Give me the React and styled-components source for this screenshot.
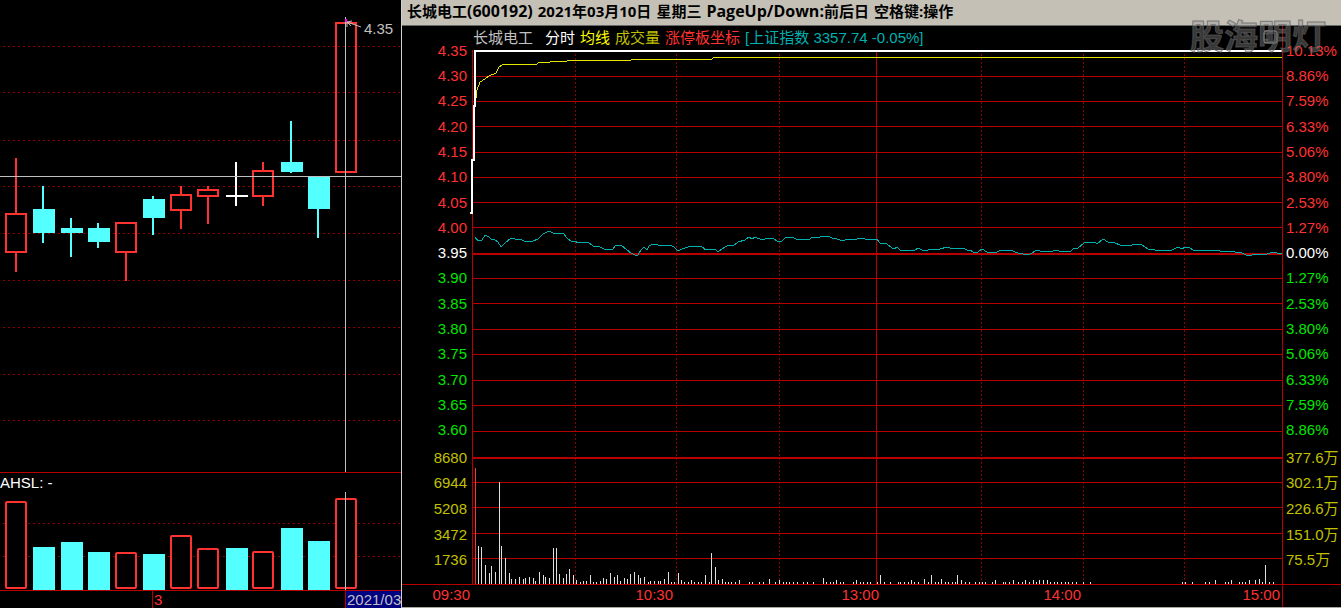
import styled, { createGlobalStyle, css } from 'styled-components';

const colorRed = '#ff3232';
const colorGrid = '#b80000';
const colorGridDim = '#900000';
const colorCyan = '#54ffff';
const colorGreen = '#00e600';
const colorGold = '#c0c000';
const colorTeal = '#00b0b0';
const colorSilver = '#c0c0c0';
const colorTitleBar = '#c4c0b6';
const fontPlain = `"Liberation Sans", "Noto Sans CJK SC", sans-serif`;

const GlobalStyle = createGlobalStyle`
  * {
    box-sizing: border-box;
  }

  body {
    margin: 0;
    background: #000;
    color: ${colorSilver};
    font-family: ${fontPlain};
    font-size: 15px;
    line-height: 18px;
  }
`;

const Page = styled.main`
  position: relative;
  display: grid;
  grid-template-columns: 401fr 940fr;
  min-height: 100vh;
  overflow: hidden;
`;

const DailyPanel = styled.section`
  display: flex;
  flex-direction: column;
  min-width: 0;
`;

const Chart = styled.svg`
  display: block;
  width: 100%;
  height: ${({ $height }) => $height}px;
  overflow: visible;
`;

const IndicatorTitle = styled.h2`
  margin: 0;
  height: 20px;
  border-top: 1px solid ${colorGrid};
  color: #fff;
  font-size: 15px;
  font-weight: 400;
  line-height: 19px;
`;

const DateAxis = styled.div`
  display: grid;
  grid-template-columns: 152fr 193fr 56fr;
  height: 18px;
  border-top: 1px solid ${colorGrid};
  line-height: 18px;
`;

const DateCell = styled.span`
  overflow: hidden;
  white-space: nowrap;
  color: ${colorRed};

  ${({ $tick }) =>
    $tick &&
    css`
      border-left: 1px solid ${colorGrid};
      padding-left: 1px;
    `
  }

  ${({ $current }) =>
    $current &&
    css`
      background: #000080;
      color: ${colorSilver};
    `
  }
`;

const MinutePanel = styled.section`
  display: flex;
  flex-direction: column;
  min-width: 0;
  border-left: 1px solid #d0d0d0;
  border-bottom: 1px solid #a8a8a0;
`;

const TitleBar = styled.h1`
  display: flex;
  gap: 5px;
  margin: 0;
  height: 26px;
  padding-left: 5px;
  border-bottom: 1px solid #686868;
  background: ${colorTitleBar};
  color: #000;
  font-family: "Open Sans", "Noto Sans CJK SC", sans-serif;
  font-size: 15px;
  font-weight: 700;
  line-height: 23px;
  white-space: nowrap;
`;

const TitleLatin = styled.span`
  font-size: 16px;
`;

const Body = styled.div`
  display: grid;
  grid-template-columns: 70px 1fr 59px;
`;

const ScaleColumn = styled.div`
  padding-top: 12px;
  text-align: right;
  padding-right: 5px;

  ${({ $side }) =>
    $side === 'right' &&
    css`
      border-left: 1px solid ${colorGrid};
      padding-left: 3px;
      padding-right: 0;
      text-align: left;
    `
  }
`;

const ScaleGroup = styled.div`
  display: grid;
  grid-auto-rows: 1fr;
  align-items: center;
  height: ${({ $height }) => $height}px;
  margin-bottom: 2px;
`;

const ScaleLabel = styled.span`
  color: ${({ $color }) => $color};
  white-space: nowrap;
`;

const Plot = styled.div`
  min-width: 0;
`;

const Legend = styled.div`
  display: flex;
  gap: 5px;
  height: 24px;
  padding-left: 1px;
  line-height: 24px;
  white-space: nowrap;
`;

const LegendName = styled.span`
  margin-right: 7px;
`;

const LegendItem = styled.span`
  color: ${({ $color }) => $color};
`;

const TimeAxis = styled.div`
  display: grid;
  grid-template-columns: 68px 203fr 206fr 202fr 199fr 61px;
  flex: 1;
  border-top: 1px solid ${colorGrid};
  color: ${colorRed};
  line-height: 20px;
  text-align: right;
`;

const TimeEnd = styled.span`
  margin-left: 2px;
  border-left: 1px solid ${colorGrid};
`;

const Watermark = styled.div`
  position: absolute;
  top: 10px;
  right: 15px;
  color: rgba(150, 150, 150, 0.4);
  font-family: "Noto Sans CJK SC", sans-serif;
  font-size: 34px;
  font-weight: 700;
  line-height: 50px;
  -webkit-text-stroke: 1px rgba(90, 90, 90, 0.7);
`;

const RestoreIcon = styled.svg`
  position: absolute;
  top: 30px;
  right: 62px;
  width: 16px;
  height: 15px;
`;

// type, left edge, high, body top, body bottom, low, top of the volume bar
const candles = [
  ['up', 5, 158, 213, 253, 272, 501],
  ['down', 33, 186, 209, 233, 243, 547],
  ['down', 61, 218, 228, 233, 257, 542],
  ['down', 88, 223, 228, 242, 248, 552],
  ['up', 115, 222, 222, 253, 281, 552],
  ['down', 143, 196, 199, 218, 235, 554],
  ['up', 170, 186, 194, 211, 229, 535],
  ['up', 197, 186, 189, 197, 224, 548],
  ['flat', 226, 162, 195, 197, 206, 548],
  ['up', 252, 162, 170, 197, 206, 551],
  ['down', 281, 121, 162, 172, 173, 528],
  ['down', 308, 177, 177, 209, 238, 541],
  ['up', 335, 22, 22, 173, 173, 498]
];

const dailyGrid = [46, 92, 140, 186, 233, 280, 327, 374, 420];

const priceLabels = [
  '4.35', '4.30', '4.25', '4.20', '4.15', '4.10', '4.05', '4.00',
  '3.95', '3.90', '3.85', '3.80', '3.75', '3.70', '3.65', '3.60'
];

const percentLabels = [
  '10.13%', '8.86%', '7.59%', '6.33%', '5.06%', '3.80%', '2.53%', '1.27%',
  '0.00%', '1.27%', '2.53%', '3.80%', '5.06%', '6.33%', '7.59%', '8.86%'
];

const volumeLabels = ['8680', '6944', '5208', '3472', '1736'];
const amountLabels = ['377.6万', '302.1万', '226.6万', '151.0万', '75.5万'];

const gridRows = [
  76, 101, 126, 152, 177, 202, 227, 278, 303, 329,
  354, 380, 405, 431, 482, 507, 533, 558
];
const gridColumns = [575, 676, 779, 981, 1083, 1184];

const pricePoints = '470,213 472,213 472,160 474,160 474,106 475,106 475,51 1282,51';

const averagePoints =
  '475,104 476,98 477,90 480,82 485,79 489,76 496,73 499,67 502,65 507,64 537,64 ' +
  '538,63 550,62 567,61 568,60 631,60 632,59 712,59 714,57 1282,57';

const indexPoints =
  '475,237 478,241 482,240 485,235 489,237 492,240 494,239 498,242 501,247 505,243 ' +
  '511,238 515,239 520,239 526,242 533,241 538,239 543,234 549,231 553,233 563,233 ' +
  '567,238 572,242 575,241 578,243 582,242 588,242 593,246 598,246 606,250 613,249 ' +
  '616,245 621,245 627,250 631,253 635,255 638,255 641,250 644,247 647,250 649,246 ' +
  '653,244 658,245 670,245 674,247 678,251 682,249 688,247 692,246 695,247 698,246 ' +
  '702,247 706,250 715,249 718,252 722,249 727,246 730,245 733,246 738,242 745,240 ' +
  '749,237 752,239 755,237 762,240 768,238 773,238 777,241 781,242 785,238 793,237 ' +
  '797,240 810,239 812,237 820,237 823,236 828,236 832,238 837,239 843,241 847,239 ' +
  '857,239 860,238 865,239 868,240 877,239 880,243 887,244 892,248 894,249 897,247 ' +
  '900,250 915,250 918,248 924,251 932,249 940,249 947,247 950,248 963,248 967,250 ' +
  '970,250 973,252 978,252 982,249 987,252 997,252 1001,250 1010,250 1018,253 ' +
  '1028,255 1032,253 1037,250 1040,251 1053,251 1057,250 1059,251 1067,251 1070,252 ' +
  '1073,249 1078,248 1084,243 1095,242 1097,244 1103,239 1108,242 1115,243 1120,245 ' +
  '1130,246 1134,244 1142,245 1148,249 1155,250 1172,250 1178,247 1182,249 1185,247 ' +
  '1189,247 1193,250 1217,250 1220,251 1232,251 1235,252 1240,252 1248,256 1252,255 ' +
  '1267,254 1273,252 1277,253 1282,254';

// x and height of every traded minute that stands out
const volumeBars = [
  [478, 37], [481, 36], [485, 18], [489, 10], [491, 17], [495, 11], [499, 101],
  [501, 37], [505, 25], [509, 10], [511, 4], [515, 4], [519, 6], [523, 4], [525, 5],
  [529, 6], [533, 5], [535, 2], [539, 11], [543, 8], [545, 6], [549, 5], [553, 35],
  [556, 35], [559, 9], [563, 5], [566, 9], [569, 14], [573, 8], [576, 3], [580, 1],
  [583, 2], [586, 2], [590, 8], [593, 1], [596, 1], [600, 2], [603, 5], [606, 4],
  [610, 10], [614, 6], [617, 8], [620, 2], [624, 5], [627, 4], [630, 9], [634, 11],
  [638, 8], [640, 5], [644, 6], [648, 1], [650, 2], [654, 2], [658, 2], [660, 2],
  [664, 4], [668, 11], [671, 1], [674, 1], [678, 10], [681, 3], [684, 1], [688, 1],
  [691, 3], [694, 1], [698, 1], [701, 1], [705, 8], [709, 1], [711, 30], [715, 16],
  [718, 3], [722, 4], [725, 1], [728, 1], [731, 1], [735, 1], [739, 3], [749, 1],
  [752, 1], [759, 1], [763, 1], [769, 4], [775, 1], [779, 3], [783, 1], [786, 1],
  [789, 1], [793, 1], [797, 1], [803, 1], [807, 1], [813, 1], [823, 5], [826, 1],
  [830, 1], [833, 1], [836, 3], [840, 1], [843, 1], [853, 1], [856, 3], [860, 1],
  [863, 1], [867, 1], [870, 1], [877, 1], [880, 8], [884, 1], [890, 1], [898, 1],
  [900, 1], [904, 1], [908, 1], [911, 3], [914, 1], [918, 1], [924, 4], [928, 1],
  [931, 8], [935, 1], [938, 1], [941, 4], [945, 1], [948, 1], [952, 1], [955, 1],
  [957, 8], [961, 3], [965, 1], [969, 1], [975, 1], [979, 1], [982, 1], [985, 1],
  [992, 1], [995, 3], [1003, 1], [1005, 1], [1009, 1], [1013, 3], [1018, 1],
  [1022, 1], [1025, 3], [1029, 1], [1033, 3], [1036, 1], [1039, 3], [1043, 3],
  [1047, 3], [1050, 1], [1054, 1], [1057, 1], [1061, 1], [1065, 1], [1068, 1],
  [1072, 1], [1076, 1], [1083, 1], [1090, 1], [1182, 1], [1185, 1], [1192, 1],
  [1205, 1], [1209, 1], [1215, 3], [1225, 1], [1228, 1], [1231, 3], [1239, 1],
  [1242, 1], [1245, 1], [1249, 3], [1255, 3], [1259, 4], [1262, 1], [1265, 18],
  [1269, 1], [1273, 1], [1282, 2]
];

const scaleColor = i => {
  if (i === 8) return '#ffffff';
  return i < 8 ? colorRed : colorGreen;
};

const Candle = ({ type, x, high, top, bottom, low }) => {
  const wickX = x + 10;

  if (type === 'up') {
    return (
      <g fill={colorRed}>
        <rect x={wickX} y={high} width="2" height={top - high} />
        <rect x={wickX} y={bottom} width="2" height={low - bottom} />
        <rect
          x={x + 1}
          y={top + 1}
          width="20"
          height={bottom - top - 2}
          fill="none"
          stroke={colorRed}
          strokeWidth="2"
        />
      </g>
    );
  }

  return (
    <g fill={type === 'flat' ? '#fff' : colorCyan}>
      <rect x={wickX - 1} y={high} width="2" height={low - high} />
      <rect x={x} y={top} width="22" height={bottom - top} />
    </g>
  );
};

const DailyChart = () => (
  <Chart $height={472} viewBox="0 0 401 472" preserveAspectRatio="none" role="img" aria-label="日K线">
    {dailyGrid.map(y => (
      <line
        key={y}
        x1="3"
        x2="401"
        y1={y + 0.5}
        y2={y + 0.5}
        stroke={colorGridDim}
        strokeDasharray="2 3"
      />
    ))}
    {candles.map(([type, x, high, top, bottom, low]) => (
      <Candle key={x} type={type} x={x} high={high} top={top} bottom={bottom} low={low} />
    ))}
    <rect x="0" y="176" width="401" height="1" fill="#c0c0c0" />
    <rect x="345" y="17" width="1" height="455" fill="#c0c0c0" />
    <path d="M347 22l14 5M347 22v5M347 22l5-1M347 22l4 4" fill="none" stroke={colorSilver} />
    <rect x="345" y="19" width="2" height="3" fill="#ff00ff" />
    <text x="364" y="34" fill={colorSilver} fontSize="15">4.35</text>
  </Chart>
);

const TurnoverChart = () => (
  <Chart $height={98} viewBox="0 492 401 98" preserveAspectRatio="none" role="img" aria-label="换手率">
    {[523, 556].map(y => (
      <line
        key={y}
        x1="3"
        x2="401"
        y1={y + 0.5}
        y2={y + 0.5}
        stroke={colorGridDim}
        strokeDasharray="2 3"
      />
    ))}
    {candles.map(([type, x, , , , , top]) =>
      type === 'up' ? (
        <rect
          key={x}
          x={x + 1}
          y={top + 1}
          width="20"
          height={587 - top}
          rx="1"
          fill="#000"
          stroke={colorRed}
          strokeWidth="2"
        />
      ) : (
        <rect key={x} x={x} y={top} width="22" height={590 - top} fill={colorCyan} />
      )
    )}
    <rect x="345" y="492" width="1" height="98" fill="#c0c0c0" />
  </Chart>
);

const MinuteChart = () => (
  <Chart $height={534} viewBox="472 50 810 534" preserveAspectRatio="none" role="img" aria-label="分时走势">
    {gridColumns.map(x => (
      <line
        key={x}
        x1={x + 0.5}
        x2={x + 0.5}
        y1="54"
        y2="584"
        stroke={colorGridDim}
        strokeDasharray="2 2"
      />
    ))}
    {gridRows.map(y => (
      <rect key={y} x="472" y={y} width="810" height="1" fill={colorGrid} />
    ))}
    <rect x="472" y="253" width="810" height="2" fill={colorGrid} />
    <rect x="472" y="457" width="810" height="2" fill={colorGrid} />
    <rect x="472" y="50" width="1" height="534" fill={colorGrid} />
    <rect x="876" y="50" width="1" height="534" fill={colorGrid} />
    <rect x="475" y="468" width="1" height="116" fill={colorRed} />
    {volumeBars.map(([x, height]) => (
      <rect key={x} x={x} y={583 - height} width="1" height={height + 1} fill="#e0e0e0" />
    ))}
    <g fill="none" shapeRendering="crispEdges">
      <polyline points={indexPoints} stroke={colorTeal} />
      <polyline points={averagePoints} stroke="#e6e600" />
      <polyline points={pricePoints} stroke="#fff" strokeWidth="2" />
    </g>
  </Chart>
);

const Scale = ({ side, prices, volumes }) => (
  <ScaleColumn $side={side}>
    <ScaleGroup $height={405}>
      {prices.map((label, i) => (
        <ScaleLabel key={i} $color={scaleColor(i)}>{label}</ScaleLabel>
      ))}
    </ScaleGroup>
    <ScaleGroup $height={128}>
      {volumes.map(label => (
        <ScaleLabel key={label} $color={colorGold}>{label}</ScaleLabel>
      ))}
    </ScaleGroup>
  </ScaleColumn>
);

function App() {
  return (
    <>
      <GlobalStyle />
      <Page>
        <DailyPanel>
          <DailyChart />
          <IndicatorTitle>AHSL: -</IndicatorTitle>
          <TurnoverChart />
          <DateAxis>
            <DateCell />
            <DateCell $tick>3</DateCell>
            <DateCell $tick $current>2021/03</DateCell>
          </DateAxis>
        </DailyPanel>
        <MinutePanel>
          <TitleBar>
            <span>长城电工<TitleLatin>(600192)</TitleLatin></span>
            <span>2021年03月10日</span>
            <span>星期三</span>
            <span><TitleLatin>PageUp/Down:</TitleLatin>前后日</span>
            <span>空格键:操作</span>
          </TitleBar>
          <Body>
            <Scale side="left" prices={priceLabels} volumes={volumeLabels} />
            <Plot>
              <Legend>
                <LegendName>长城电工</LegendName>
                <LegendItem $color="#ffffff">分时</LegendItem>
                <LegendItem $color="#ffff00">均线</LegendItem>
                <LegendItem $color={colorGold}>成交量</LegendItem>
                <LegendItem $color={colorRed}>涨停板坐标</LegendItem>
                <LegendItem $color={colorTeal}>[上证指数 3357.74 -0.05%]</LegendItem>
              </Legend>
              <MinuteChart />
            </Plot>
            <Scale side="right" prices={percentLabels} volumes={amountLabels} />
          </Body>
          <TimeAxis>
            <span>09:30</span>
            <span>10:30</span>
            <span>13:00</span>
            <span>14:00</span>
            <span>15:00</span>
            <TimeEnd />
          </TimeAxis>
        </MinutePanel>
        <Watermark>股海明灯</Watermark>
        <RestoreIcon viewBox="0 0 16 15" aria-hidden="true">
          <rect x="1" y="1" width="13" height="12" rx="2" fill="none" stroke="#8a8a8a" />
          <rect x="4" y="3" width="8" height="9" rx="1" fill="none" stroke="#6a6a6a" />
        </RestoreIcon>
      </Page>
    </>
  );
}

export default App;
